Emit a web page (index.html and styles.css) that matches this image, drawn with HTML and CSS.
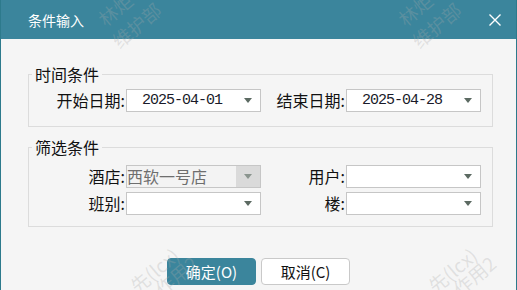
FILE: index.html
```html
<!DOCTYPE html>
<html lang="zh-CN">
<head>
    <meta charset="UTF-8">
    <meta name="viewport" content="width=device-width, initial-scale=1.0">
    <title>条件输入</title>
    <link rel="stylesheet" href="styles.css">
</head>
<body>
    <div class="dialog">
        <div class="titlebar">
            <span class="title">条件输入</span>
            <span class="close">
                <svg width="12" height="12" viewBox="0 0 12 12"><path d="M0.5 0.5 L11.5 11.5 M11.5 0.5 L0.5 11.5" stroke="#fff" stroke-width="1.4" fill="none"/></svg>
            </span>
        </div>
        <div class="content">
            <fieldset class="group group-time">
                <legend>时间条件</legend>
                <div class="grid">
                    <label class="lbl">开始日期:</label>
                    <div class="combo"><span class="val date">2025-04-01</span><span class="arrow"></span></div>
                    <label class="lbl">结束日期:</label>
                    <div class="combo"><span class="val date">2025-04-28</span><span class="arrow"></span></div>
                </div>
            </fieldset>
            <fieldset class="group group-filter">
                <legend>筛选条件</legend>
                <div class="grid">
                    <label class="lbl">酒店:</label>
                    <div class="combo disabled"><span class="val">西软一号店</span><span class="drop"><span class="arrow"></span></span></div>
                    <label class="lbl">用户:</label>
                    <div class="combo"><span class="val"></span><span class="arrow"></span></div>
                    <label class="lbl">班别:</label>
                    <div class="combo"><span class="val"></span><span class="arrow"></span></div>
                    <label class="lbl">楼:</label>
                    <div class="combo"><span class="val"></span><span class="arrow"></span></div>
                </div>
            </fieldset>
            <div class="actions">
                <button class="btn primary">确定(O)</button>
                <button class="btn">取消(C)</button>
            </div>
        </div>
        <div class="watermarks">
            <span class="wm wm-1">林炬</span>
            <span class="wm wm-2">维护部</span>
            <span class="wm wm-3">林炬</span>
            <span class="wm wm-4">维护部</span>
            <span class="wm wm-5">先(lcx)</span>
            <span class="wm wm-6">作用2</span>
            <span class="wm wm-7">先(lcx)</span>
            <span class="wm wm-8">作用2</span>
        </div>
    </div>
</body>
</html>
```

FILE: styles.css
```css
* { box-sizing: border-box; }
body {
    margin: 0;
    padding: 0;
    font-family: "Noto Sans CJK SC", "Liberation Sans", sans-serif;
    background: #f5f5f5;
    color: #111;
    overflow: hidden;
}
.dialog {
    position: relative;
    width: 517px;
    height: 290px;
    background: #f5f5f5;
    border-left: 1px solid #2d7a8c;
    border-right: 1px solid #2d7a8c;
    overflow: hidden;
}
.titlebar {
    height: 39px;
    background: #3b859c;
    color: #fff;
    display: flex;
    align-items: center;
    justify-content: space-between;
    padding: 0 15px 0 27px;
}
.title {
    font-size: 14px;
    line-height: 20px;
}
.close {
    display: flex;
    width: 12px;
    height: 12px;
}
.content {
    padding: 25px 23px 0 27px;
}
.group {
    margin: 0;
    border: 1px solid #dcdcdc;
    min-width: 0;
    padding: 5px 0 14px 0;
}
.group legend {
    font-size: 16px;
    line-height: 20px;
    margin-left: 3px;
    padding: 0 3px;
}
.group-filter {
    margin-top: 10px;
    padding: 8px 0 11px 0;
}
.grid {
    display: grid;
    grid-template-columns: 97px 135px 85px 135px;
    grid-auto-rows: 23px;
    row-gap: 4px;
}
.lbl {
    font-size: 16px;
    line-height: 23px;
    text-align: right;
    padding-right: 1px;
    white-space: nowrap;
}
.combo {
    display: flex;
    align-items: center;
    height: 23px;
    border: 1px solid #c6c6c6;
    background: #fff;
    padding-right: 8px;
}
.val {
    flex: 1;
    font-size: 16px;
    line-height: 21px;
    white-space: nowrap;
}
.val.date {
    font-family: "Liberation Mono", monospace;
    font-size: 15px;
    letter-spacing: -1px;
    padding-left: 15px;
    color: #1a1a2a;
}
.arrow {
    width: 0;
    height: 0;
    border-left: 4px solid transparent;
    border-right: 4px solid transparent;
    border-top: 5px solid #5c6a62;
}
.combo.disabled {
    background: #f3f3f3;
    padding-right: 0;
}
.combo.disabled .val {
    color: #6e6e6e;
    padding-left: 0;
}
.drop {
    width: 24px;
    height: 100%;
    background: #dadada;
    display: flex;
    align-items: center;
    justify-content: center;
}
.drop .arrow {
    border-top-color: #8a948e;
}
.actions {
    display: flex;
    justify-content: center;
    gap: 5px;
    margin-top: 31px;
    padding-right: 4px;
}
.btn {
    width: 89px;
    height: 27px;
    border: 1px solid #c9c9c9;
    border-radius: 4px;
    background: #fff;
    font-family: "Noto Sans CJK SC", "Liberation Sans", sans-serif;
    font-size: 15px;
    line-height: 20px;
    color: #111;
    padding: 0;
}
.btn.primary {
    background: #3b859c;
    border-color: #3b859c;
    color: #fff;
}
.watermarks {
    position: absolute;
    inset: 0;
    pointer-events: none;
}
.wm {
    position: absolute;
    font-size: 19px;
    line-height: 20px;
    color: rgba(170, 170, 170, 0.28);
    transform: rotate(-40deg);
    transform-origin: 0 100%;
    white-space: nowrap;
}
.wm-1 { left: 106px; top: 9px; }
.wm-2 { left: 120px; top: 31px; }
.wm-3 { left: 406px; top: 9px; }
.wm-4 { left: 420px; top: 31px; }
.wm-5 { left: 138px; top: 276px; }
.wm-6 { left: 163px; top: 279px; }
.wm-7 { left: 436px; top: 276px; }
.wm-8 { left: 461px; top: 279px; }
```
